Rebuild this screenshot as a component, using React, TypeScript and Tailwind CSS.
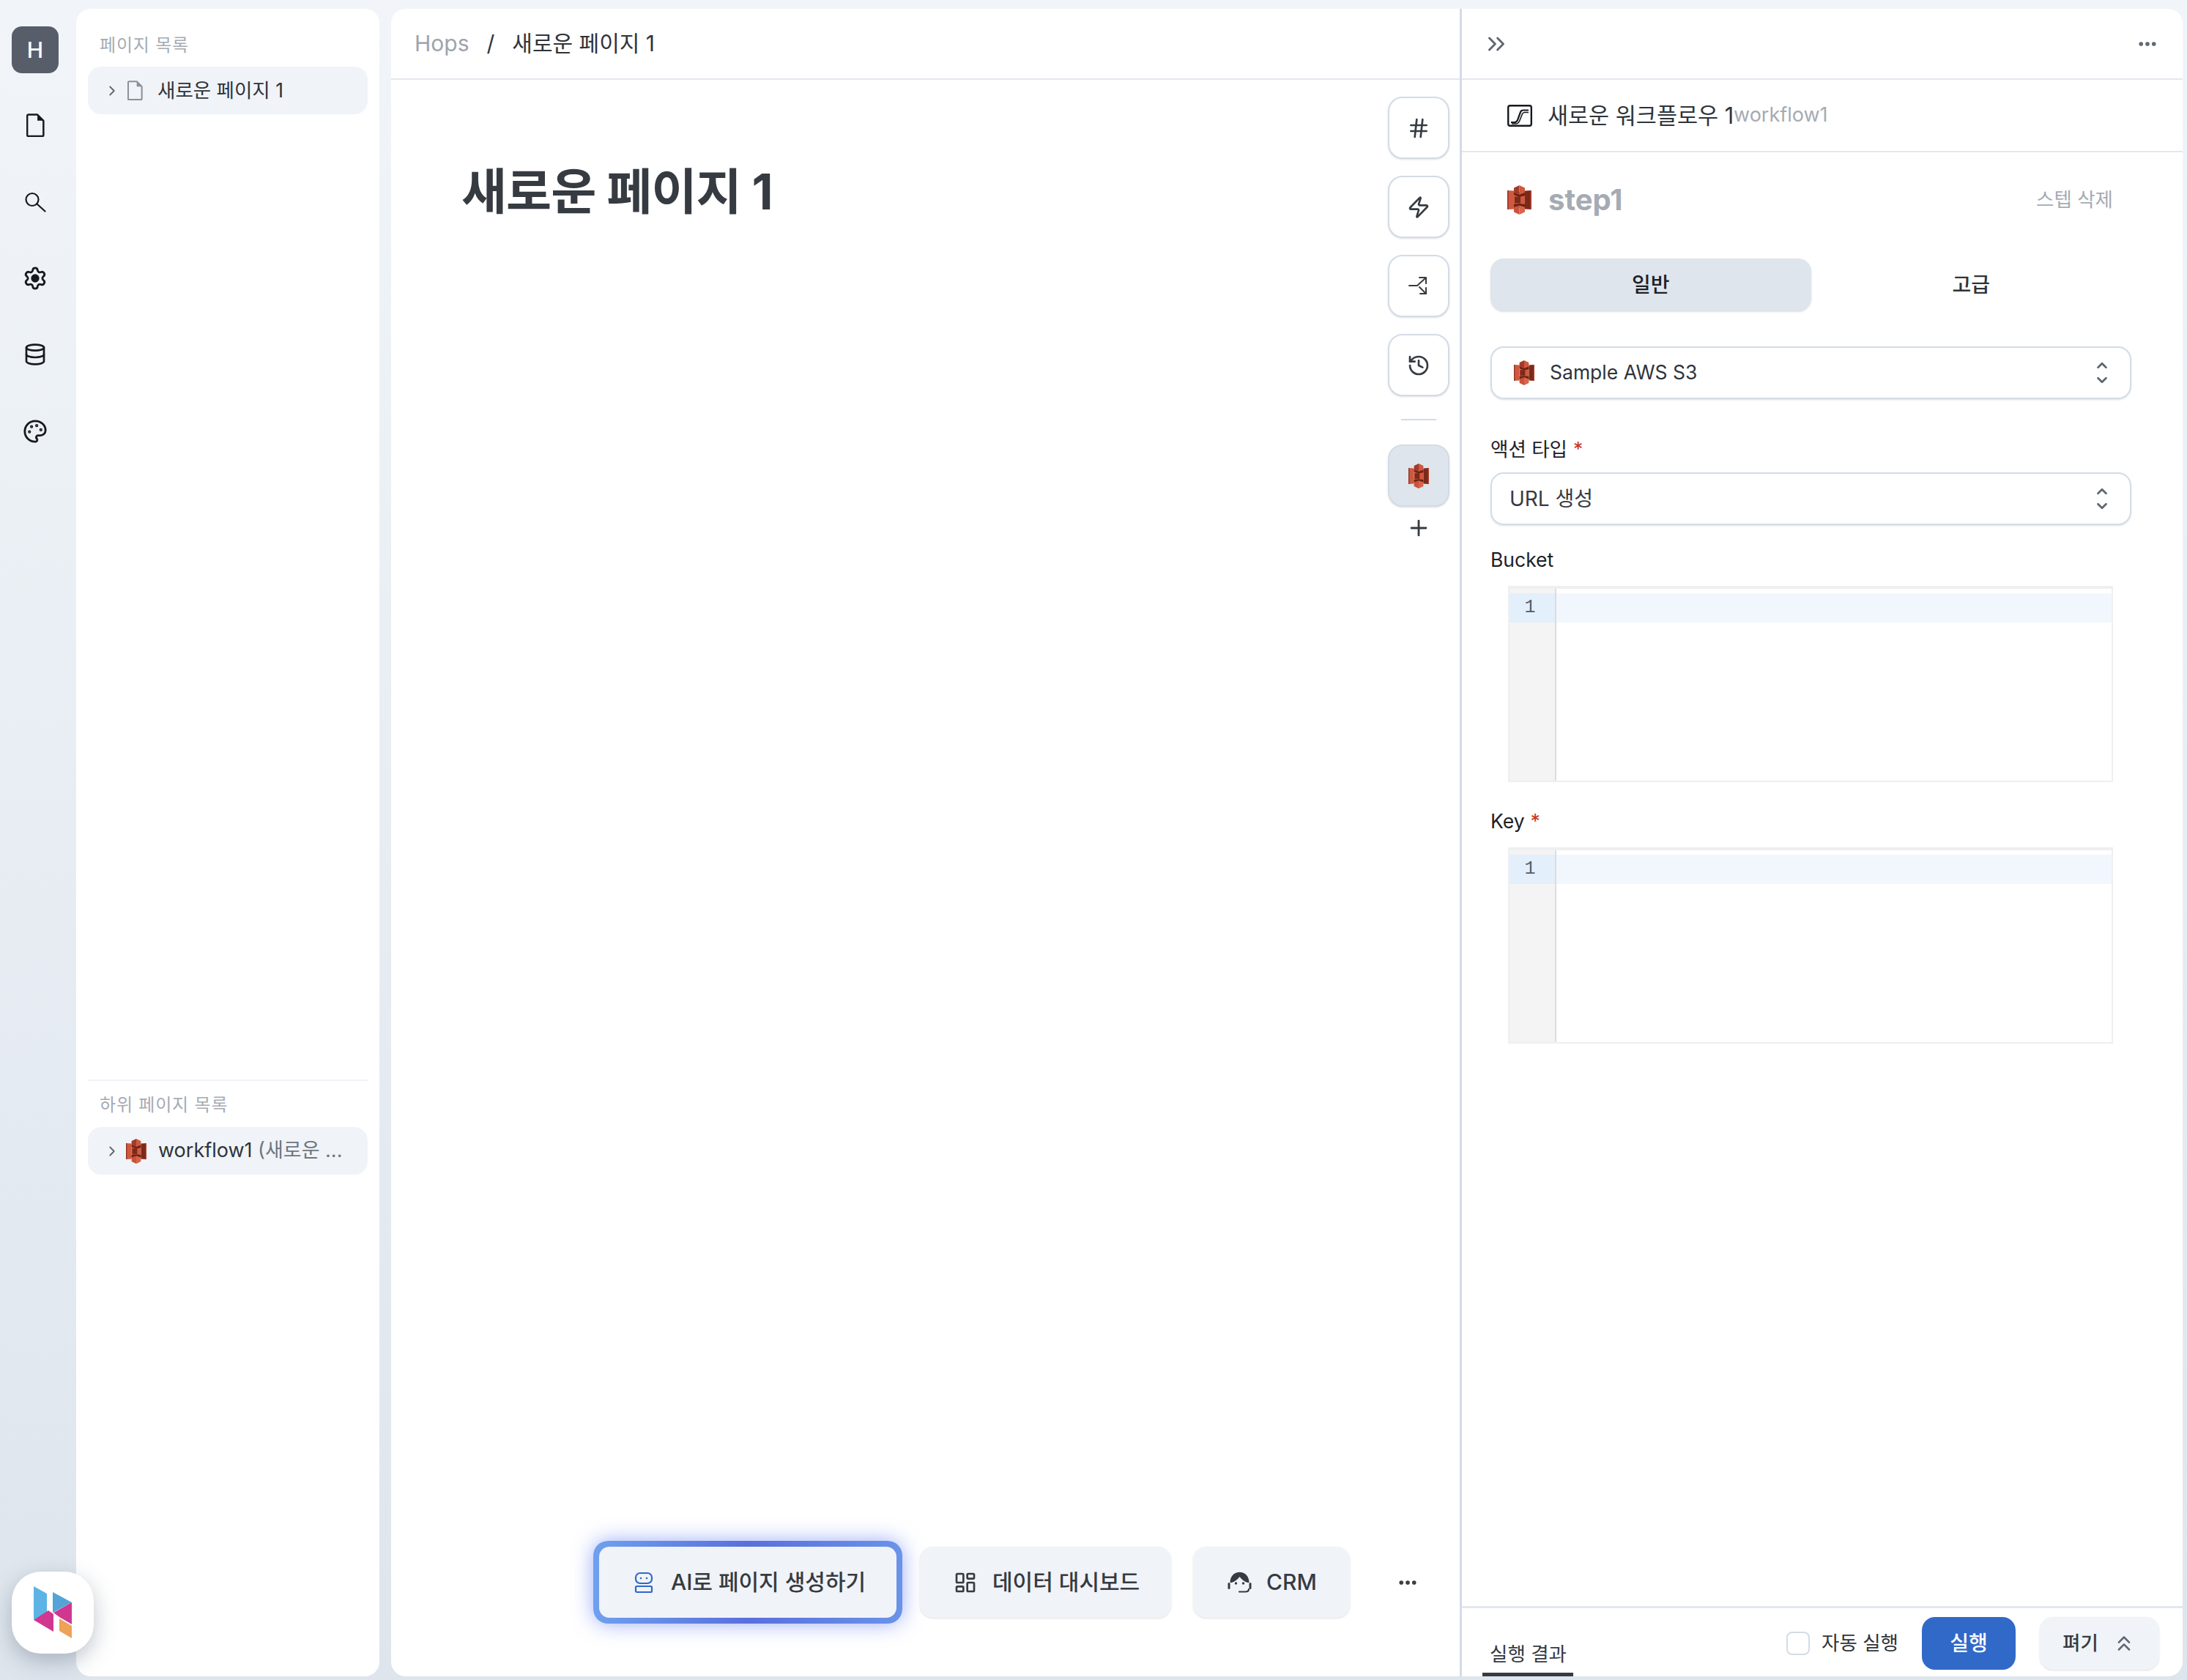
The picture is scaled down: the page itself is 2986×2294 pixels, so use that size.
import { ChevronRight, ChevronUp, ChevronDown, ChevronsRight, ChevronsUp, Database, Ellipsis, Hash, History, LayoutDashboard, Palette, Plus, Settings, Zap } from "lucide-react";

const S3Icon = ({ className }: { className?: string }) => (
  <svg viewBox="0 0 33 40" className={className}>
    <polygon points="0,7 9,7.500 9,32.500 0,33" fill="#d0583f" />
    <polygon points="0,7 1.5,7.100 1.5,32.900 0,33" fill="#8c3123" />
    <polygon points="24,7.500 33,7 33,33 24,32.500" fill="#7a2a1a" />
    <polygon points="31.5,7.100 33,7 33,33 31.5,32.900" fill="#b5452f" />
    <rect x="9" y="9" width="15" height="22" fill="#d0583f" />
    <polygon points="9,3.5 16.5,0 16.5,13 9,10" fill="#a03c2a" />
    <polygon points="16.5,0 24,3.5 24,10 16.5,13" fill="#d0583f" />
    <polygon points="9,10 16.5,13 24,10 24,14 16.5,16 9,13" fill="#6b2213" />
    <rect x="10" y="15.500" width="8" height="9" fill="#7a2a1a" />
    <polygon points="9,26 16.5,25 24,26 24,30 16.5,28 9,30" fill="#6b2213" />
    <polygon points="9,30 16.5,27.500 16.5,40 9,36.500" fill="#c9523c" />
    <polygon points="16.5,27.500 24,30 24,36.500 16.5,40" fill="#d9634b" />
  </svg>
);

const FileIcon = ({ className }: { className?: string }) => (
  <svg viewBox="0 0 24 31" fill="none" stroke="currentColor" strokeWidth="2.4" strokeLinejoin="round" className={className}>
    <path d="M2.500 1.500h12l8 8v19a1.500 1.500 0 0 1-1.500 1.500H2.500A1.500 1.500 0 0 1 1 28.500V3a1.500 1.500 0 0 1 1.500-1.500z" />
    <path d="M14.500 1.500l8 8h-8z" fill="currentColor" stroke="none" />
  </svg>
);

const SearchIcon = () => (
  <svg viewBox="0 0 30 28" fill="none" stroke="currentColor" strokeWidth="2.200" strokeLinecap="round" className="h-[28px] w-[30px]">
    <circle cx="11" cy="10.500" r="8.500" />
    <path d="M17.500 16.500l11 10" />
  </svg>
);

const EscalatorIcon = () => (
  <svg viewBox="0 0 34 30" fill="none" stroke="#16191d" className="h-[30px] w-[34px]">
    <rect x="1.200" y="1.200" width="31.600" height="27.600" rx="2.500" strokeWidth="2.400" />
    <path d="M5 24h5c2 0 3-1 4-3l4-11c.6-1.500 1.600-2.500 3.500-2.500H29" strokeWidth="2.200" />
    <path d="M6 26h5.500c2.500 0 4-1.500 5-3.500l4-10c.5-1.200 1.200-2 3-2H29" strokeWidth="1.600" />
  </svg>
);

const SplitIcon = () => (
  <svg viewBox="0 0 32 32" fill="none" stroke="#363b42" strokeWidth="2" strokeLinecap="round" strokeLinejoin="round" className="h-[32px] w-[32px]">
    <path d="M3 15h11l11-10" />
    <path d="M17 4h9v8" />
    <path d="M17 17l9 9" />
    <path d="M26 18v8h-8" />
  </svg>
);

const RobotIcon = () => (
  <svg viewBox="0 0 26 30" fill="none" stroke="#2f69c8" strokeWidth="2.200" className="h-[30px] w-[26px]">
    <rect x="2" y="2" width="22" height="14" rx="6" />
    <circle cx="9" cy="9" r="1.300" fill="#2f69c8" stroke="none" />
    <circle cx="17" cy="9" r="1.300" fill="#2f69c8" stroke="none" />
    <rect x="2" y="20" width="22" height="8" rx="1.500" />
  </svg>
);

const AgentIcon = () => (
  <svg viewBox="0 0 33 29" className="h-[29px] w-[33px]" fill="#363b42">
    <path d="M3.500 15C3.500 6 9.500.8 16.500.8S29.500 6 29.500 15h-2.200c-4.300-1.500-7.800-4-10.800-8-3 4-6.500 6.500-10.800 8z" />
    <rect x="0.500" y="15" width="3" height="9" rx="1.500" />
    <rect x="29.500" y="15" width="3" height="9" rx="1.500" />
    <circle cx="11.500" cy="16" r="1.700" />
    <circle cx="21.500" cy="16" r="1.700" />
    <path d="M29 24c0 2.500-2 3.500-4.500 3.500H16" fill="none" stroke="#363b42" strokeWidth="2.200" strokeLinecap="round" />
  </svg>
);

const HopsLogo = () => (
  <svg viewBox="0 0 52 72" className="h-[72px] w-[52px]">
    <polygon points="0,0 18,10 18,36 0,46" fill="#5bb4e5" />
    <polygon points="26,8 52,22 26,36" fill="#54a4d8" />
    <polygon points="0,46 20,33 27,38 27,62" fill="#cf3791" />
    <polygon points="27,36 52,22 52,52 35,42" fill="#cf3791" />
    <polygon points="35,44 52,54 52,71 35,61" fill="#eda257" />
  </svg>
);

const UpDown = () => (
  <span className="flex flex-col text-[#5f6670]">
    <ChevronUp className="h-[22px] w-[22px]" strokeWidth={3} />
    <ChevronDown className="-mt-[2px] h-[22px] w-[22px]" strokeWidth={3} />
  </span>
);

const ToolButton = ({ children, active }: { children: React.ReactNode; active?: boolean }) => (
  <button
    type="button"
    className={`flex h-[85px] w-[84px] items-center justify-center rounded-[20px] border-2 border-[#d3dce6] shadow-sm ${active ? "bg-[#dee5ec]" : "bg-white"}`}
  >
    {children}
  </button>
);

const Label = ({ text, required }: { text: string; required?: boolean }) => (
  <p className="text-[26.5px] leading-[40px] text-[#1e2126]">
    {text}
    {required && <span className="ml-[8px] text-[#c8321f]">*</span>}
  </p>
);

const Editor = () => (
  <div className="ml-[24px] mr-[25px] mt-[15px] flex h-[268px] border-2 border-t-[4px] border-[#eeeff1]">
    <div className="w-[64px] border-r-2 border-[#dddddd] bg-[#f4f4f4] pt-[6px]">
      <div className="h-[40px] bg-[#e3effb] pr-[6px] text-center font-['Liberation_Mono',monospace] text-[25px] leading-[40px] text-[#555c65]">1</div>
    </div>
    <div className="flex-1 pt-[6px]">
      <div className="h-[40px] bg-[#f1f7fd]" />
    </div>
  </div>
);

const railIcons = [
  <FileIcon key="file" className="h-[32px] w-[25px]" />,
  <SearchIcon key="search" />,
  <Settings key="settings" className="h-[34px] w-[34px] [&_circle]:fill-current" strokeWidth={2} />,
  <Database key="db" className="h-[32px] w-[32px]" strokeWidth={2} />,
  <Palette key="palette" className="h-[34px] w-[34px]" strokeWidth={2} />
];

export default function App() {
  return (
    <div className="relative flex h-[2294px] w-[2986px] overflow-hidden bg-gradient-to-b from-[#f1f5f9] to-[#dee5ed] pb-[5px] pr-[6px] pt-[12px] font-['Inter','Noto_Sans_CJK_KR',sans-serif] text-[#363b42]">
      <aside className="flex w-[104px] shrink-0 flex-col items-center pr-[8px] pt-[24px] text-[#16191d]">
        <div className="flex h-[64px] w-[64px] items-center justify-center rounded-[14px] bg-[#575e69] text-[30px] font-medium text-white">H</div>
        <div className="mt-[19px] flex flex-col items-center">
          {railIcons.map((icon, index) => (
            <div key={index} className="flex h-[104.400px] items-center justify-center">{icon}</div>
          ))}
        </div>
      </aside>

      <nav className="flex w-[414px] shrink-0 flex-col rounded-[20px] bg-white px-[16px]">
        <div className="flex-1">
          <p className="px-[16px] pt-[35px] text-[24px] leading-[30px] tracking-[0.8px] text-[#a5abb3]">페이지 목록</p>
          <div className="mt-[14px] flex h-[65px] items-center rounded-[18px] bg-[#f0f3f8] pl-[22px]">
            <ChevronRight className="h-[22px] w-[22px] text-[#5f6670]" strokeWidth={2} />
            <FileIcon className="ml-[10px] h-[27px] w-[21px] text-[#8b9199]" />
            <span className="ml-[20px] text-[26.5px] text-[#2f343a]">새로운 페이지 1</span>
          </div>
        </div>
        <div className="h-[815px] border-t-2 border-[#f0f3f8]">
          <p className="px-[16px] pt-[18px] text-[24px] leading-[30px] tracking-[0.8px] text-[#a5abb3]">하위 페이지 목록</p>
          <div className="mt-[15px] flex h-[65px] items-center rounded-[18px] bg-[#f0f3f8] pl-[22px]">
            <ChevronRight className="h-[22px] w-[22px] text-[#5f6670]" strokeWidth={2} />
            <S3Icon className="ml-[8px] h-[34px] w-[28px]" />
            <span className="ml-[16px] text-[27px] text-[#2f343a]">workflow1 <span className="text-[#6f767f]">(새로운 ...</span></span>
          </div>
        </div>
      </nav>

      <main className="ml-[16px] flex w-[1462px] shrink-0 flex-col rounded-l-[20px] border-r-[3px] border-[#d3dce6] bg-white">
        <header className="flex h-[97px] shrink-0 items-center border-b-2 border-[#e3e8ee] pl-[32px] text-[30px]">
          <span className="text-[#9ea4ac]">Hops</span>
          <span className="ml-[24px] text-[#2f343a]">/</span>
          <span className="ml-[24px] text-[#2f343a]">새로운 페이지 1</span>
        </header>
        <div className="flex flex-1">
          <h1 className="flex-1 pl-[96px] pt-[105px] text-[67.500px] font-bold leading-[96px] tracking-[-1px] text-[#363b42]">새로운 페이지 1</h1>
          <div className="mr-[14px] flex w-[84px] flex-col items-center gap-[23px] pt-[23px]">
            <ToolButton><Hash className="h-[32px] w-[32px]" strokeWidth={2} /></ToolButton>
            <ToolButton><Zap className="h-[32px] w-[32px]" strokeWidth={2} /></ToolButton>
            <ToolButton><SplitIcon /></ToolButton>
            <ToolButton><History className="h-[32px] w-[32px]" strokeWidth={2} /></ToolButton>
            <div className="my-[8px] h-[2px] w-[48px] bg-[#d3dce6]" />
            <div className="mt-[2px] flex flex-col items-center">
              <ToolButton active><S3Icon className="h-[34px] w-[28px]" /></ToolButton>
              <Plus className="mt-[12px] h-[34px] w-[34px]" strokeWidth={2} />
            </div>
          </div>
        </div>
        <div className="flex items-center pb-[72px] pl-[276px]">
          <div className="rounded-[20px] bg-gradient-to-r from-[#6fa0ee] via-[#5a6fdc] to-[#6a93ea] p-[8px] shadow-[0_0_28px_rgba(90,120,240,0.6)]">
            <button type="button" className="flex h-[97px] w-[406px] items-center justify-center gap-[24px] rounded-[14px] bg-[#f0f3f8] pl-[6px] text-[30px] font-medium">
              <RobotIcon />
              AI로 페이지 생성하기
            </button>
          </div>
          <button type="button" className="ml-[24px] flex h-[97px] w-[343px] items-center rounded-[18px] bg-[#f0f3f8] pl-[46px] text-[30px] font-medium shadow-sm">
            <LayoutDashboard className="h-[32px] w-[32px]" strokeWidth={2} />
            <span className="ml-[21px]">데이터 대시보드</span>
          </button>
          <button type="button" className="ml-[30px] flex h-[97px] w-[214px] items-center justify-center gap-[20px] rounded-[18px] bg-[#f0f3f8] pl-[2px] text-[30px] font-medium shadow-sm">
            <AgentIcon />
            CRM
          </button>
          <Ellipsis className="ml-[64px] h-[30px] w-[30px]" strokeWidth={2.5} />
        </div>
      </main>

      <section className="flex flex-1 flex-col rounded-r-[20px] bg-white">
        <div className="flex h-[97px] shrink-0 items-center justify-between border-b-2 border-[#e3e8ee] pl-[28px] pr-[33px]">
          <ChevronsRight className="h-[38px] w-[38px] text-[#5f6670]" strokeWidth={1.8} />
          <Ellipsis className="h-[30px] w-[30px] text-[#5f6670]" strokeWidth={2.5} />
        </div>
        <div className="flex h-[99px] shrink-0 items-center border-b-2 border-[#e3e8ee] pl-[62px]">
          <EscalatorIcon />
          <span className="ml-[21px] text-[30.500px] text-[#2f343a]">새로운 워크플로우 1</span>
          <span className="text-[27px] text-[#a5abb3]">workflow1</span>
        </div>
        <div className="flex flex-1 flex-col pl-[39px] pr-[70px]">
          <div className="flex h-[130px] shrink-0 items-center justify-between pl-[23px] pr-[25px]">
            <div className="flex items-center">
              <S3Icon className="h-[40px] w-[33px]" />
              <span className="ml-[23px] text-[40px] font-bold text-[#a5abb3]">step1</span>
            </div>
            <span className="text-[26.500px] text-[#a5abb3]">스텝 삭제</span>
          </div>
          <div className="mt-[15px] grid shrink-0 grid-cols-2 text-[28px] font-medium">
            <div className="flex h-[72px] items-center justify-center rounded-[18px] bg-[#dee5ec] text-[#1e2126] shadow-sm">일반</div>
            <div className="flex h-[72px] items-center justify-center text-[#2f343a]">고급</div>
          </div>
          <div className="mt-[48px] flex h-[72px] shrink-0 items-center justify-between rounded-[18px] border-2 border-[#d3dce6] pl-[30px] pr-[27px] shadow-sm">
            <div className="flex items-center">
              <S3Icon className="h-[34px] w-[28px]" />
              <span className="ml-[21px] text-[26.500px] text-[#2f343a]">Sample AWS S3</span>
            </div>
            <UpDown />
          </div>
          <div className="mt-[48px]"><Label text="액션 타입" required /></div>
          <div className="mt-[12px] flex h-[72px] shrink-0 items-center justify-between rounded-[18px] border-2 border-[#d3dce6] pl-[24px] pr-[27px] shadow-sm">
            <span className="text-[28px] text-[#363b42]">URL 생성</span>
            <UpDown />
          </div>
          <div className="mt-[27px]"><Label text="Bucket" /></div>
          <div className="pt-[1px]"><Editor /></div>
          <div className="mt-[33px]"><Label text="Key" required /></div>
          <div className="pt-[1px]"><Editor /></div>
        </div>
        <div className="flex h-[96px] shrink-0 items-end border-t-[3px] border-[#e3e8ee] pl-[28px] pr-[32px]">
          <div className="h-[51px] border-b-[5px] border-[#363b42] pl-[10px] pr-[9px] text-[26.500px] leading-[40px]">실행 결과</div>
          <div className="ml-auto flex h-[84px] items-center self-start pt-[12px]">
            <span className="h-[32px] w-[32px] rounded-[8px] border-2 border-[#d3dce6]" />
            <span className="ml-[16px] text-[26.500px] text-[#2f343a]">자동 실행</span>
            <button type="button" className="ml-[32px] flex h-[72px] w-[128px] items-center justify-center rounded-[18px] bg-[#3069c8] text-[28px] font-medium text-white">실행</button>
            <button type="button" className="ml-[33px] flex h-[72px] w-[163px] items-center justify-center gap-[18px] rounded-[18px] bg-[#f0f3f8] text-[26.500px] font-medium shadow-sm">
              펴기
              <ChevronsUp className="h-[34px] w-[34px] text-[#5f6670]" strokeWidth={1.8} />
            </button>
          </div>
        </div>
      </section>

      <div className="absolute left-[16px] top-[2146px] flex h-[112px] w-[112px] items-center justify-center rounded-[40px] bg-white shadow-[0_10px_30px_rgba(70,85,105,0.35)]">
        <HopsLogo />
      </div>
    </div>
  );
}
